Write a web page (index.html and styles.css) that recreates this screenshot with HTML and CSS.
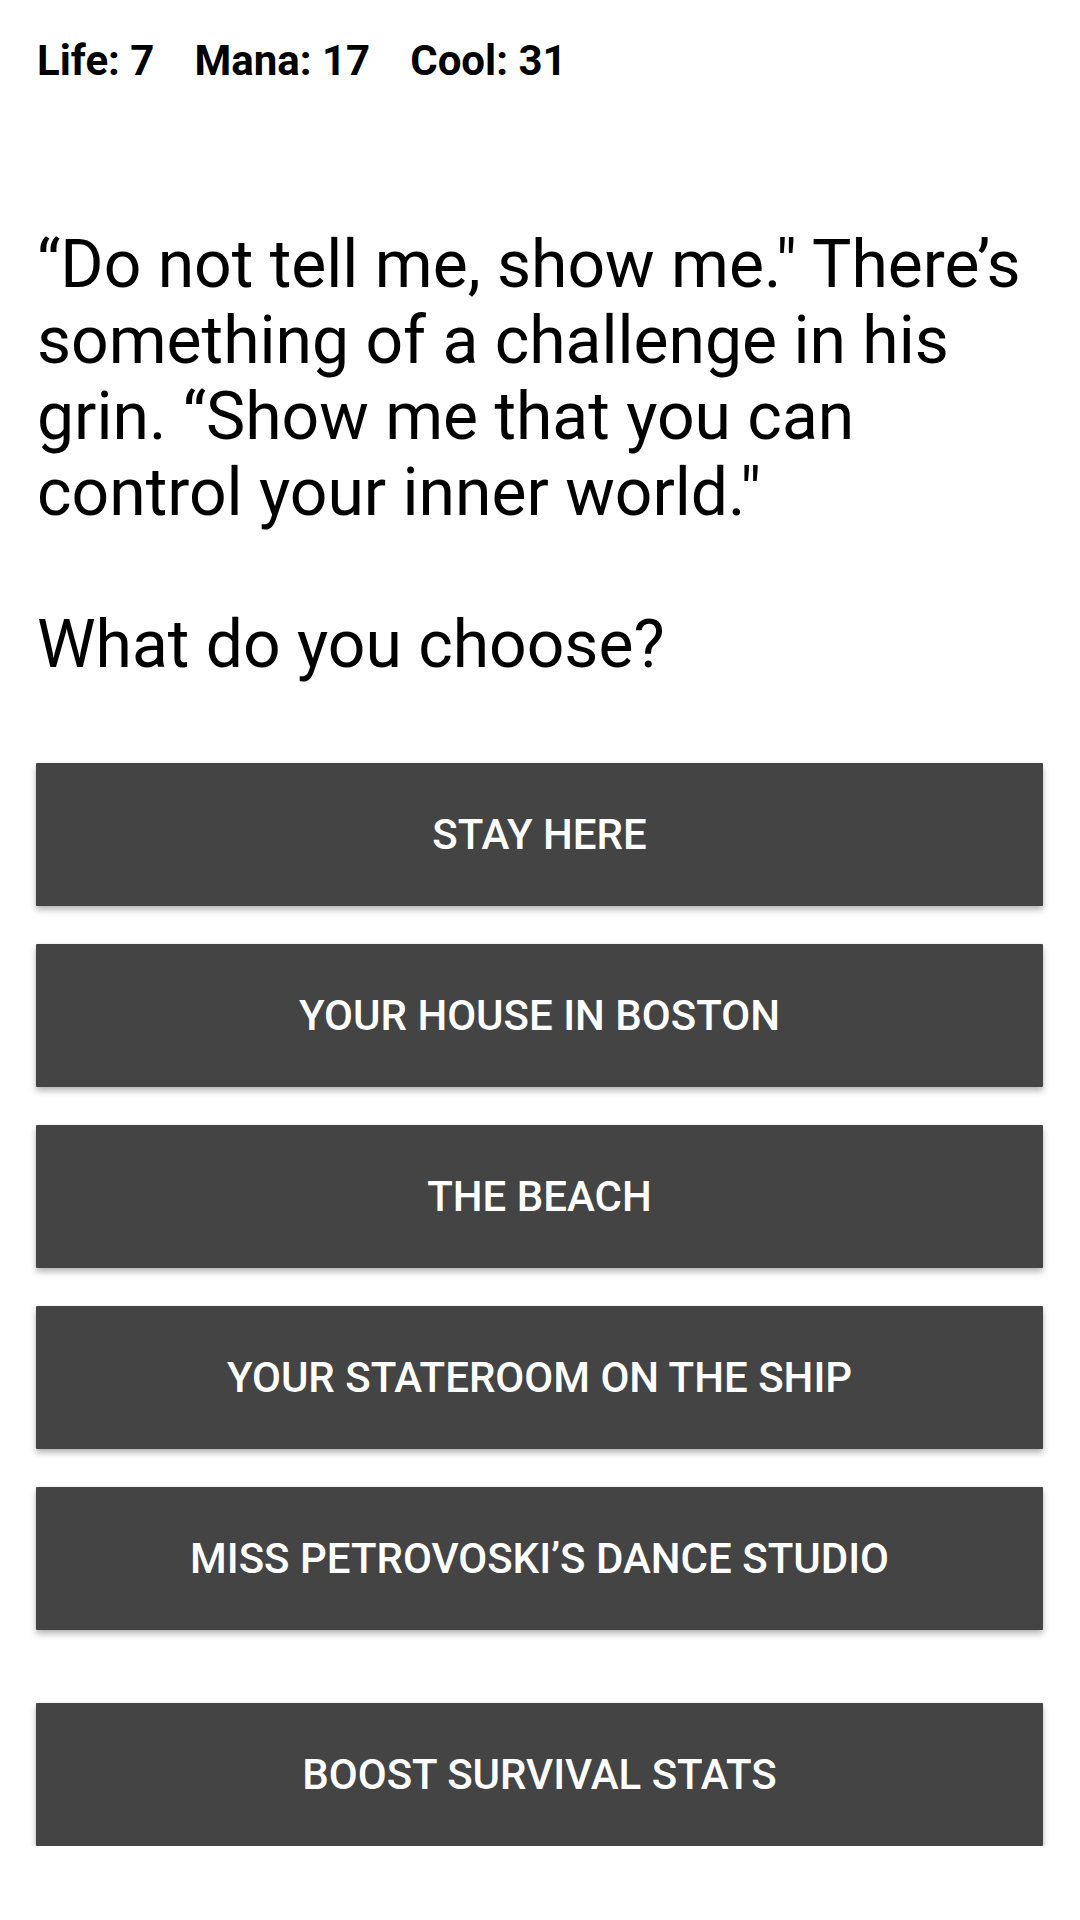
FILE: index.html
```html
<!DOCTYPE html>
<html lang="en">
<head>
    <meta charset="UTF-8">
    <meta name="viewport" content="width=device-width, initial-scale=1.0">
    <title>Choice</title>
    <link rel="stylesheet" href="styles.css">
</head>
<body>
    <div class="game">
        <div class="stats">
            <span class="stat">Life: 7</span>
            <span class="stat">Mana: 17</span>
            <span class="stat">Cool: 31</span>
        </div>

        <div class="story">
            <p>“Do not tell me, show me." There’s something of a challenge in his grin. “Show me that you can control your inner world."</p>
            <p class="prompt">What do you choose?</p>
        </div>

        <div class="choices">
            <button class="choice-btn">Stay here</button>
            <button class="choice-btn">Your house in Boston</button>
            <button class="choice-btn">The beach</button>
            <button class="choice-btn">Your stateroom on the ship</button>
            <button class="choice-btn">Miss Petrovoski’s dance studio</button>
        </div>

        <button class="choice-btn boost-btn">Boost survival stats</button>
    </div>
</body>
</html>
```

FILE: styles.css
```css
* {
    margin: 0;
    padding: 0;
    box-sizing: border-box;
}

body {
    font-family: Roboto, "Noto Sans", Arial, sans-serif;
    background-color: #ffffff;
    color: #000000;
}

.game {
    padding: 36px 37px 0 36px;
}

.stats {
    display: flex;
    gap: 40px;
    font-size: 42px;
    font-weight: 700;
    padding-left: 1px;
}

.story {
    margin-top: 142px;
    font-size: 66px;
    line-height: 76px;
    padding-left: 1px;
}

.story .prompt {
    margin-top: 76px;
}

.choices {
    margin-top: 80px;
    display: flex;
    flex-direction: column;
    gap: 38px;
}

.choice-btn {
    display: block;
    width: 100%;
    height: 143px;
    background-color: #444444;
    color: #ffffff;
    border: none;
    border-radius: 1px;
    font-family: Roboto, "Noto Sans", Arial, sans-serif;
    font-size: 42px;
    font-weight: 500;
    text-transform: uppercase;
    box-shadow: 0 4px 6px rgba(0, 0, 0, 0.28), 0 0 2px rgba(0, 0, 0, 0.08);
    cursor: pointer;
}

.boost-btn {
    margin-top: 73px;
}
```
